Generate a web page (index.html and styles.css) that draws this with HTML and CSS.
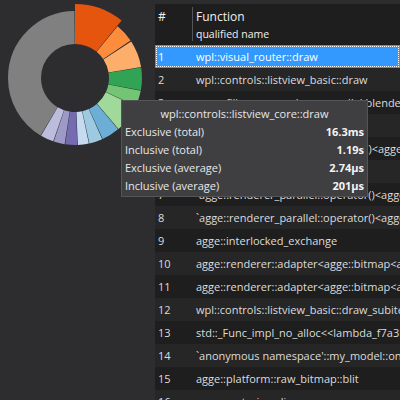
FILE: index.html
```html
<!DOCTYPE html>
<html>
<head>
<meta charset="utf-8">
<link rel="stylesheet" href="styles.css">
</head>
<body>
<div class="app">
  <div class="chart">
    <svg width="155" height="400" viewBox="0 0 155 400">
      <g transform="rotate(-90 75 78)" fill="none">
        <circle class="seg" cx="75" cy="78" r="50.5" pathLength="360" stroke="#808080" stroke-dasharray="148.5 360" stroke-dashoffset="-211"/>
        <circle class="seg" cx="75" cy="78" r="50.5" pathLength="360" stroke="#fd8d3c" stroke-dasharray="16.5 360" stroke-dashoffset="-39.5"/>
        <circle class="seg" cx="75" cy="78" r="50.5" pathLength="360" stroke="#fdae6b" stroke-dasharray="23.5 360" stroke-dashoffset="-57"/>
        <circle class="seg" cx="75" cy="78" r="50.5" pathLength="360" stroke="#31a354" stroke-dasharray="19.5 360" stroke-dashoffset="-81"/>
        <circle class="seg" cx="75" cy="78" r="50.5" pathLength="360" stroke="#74c476" stroke-dasharray="13.5 360" stroke-dashoffset="-101"/>
        <circle class="seg" cx="75" cy="78" r="50.5" pathLength="360" stroke="#a1d99b" stroke-dasharray="24.5 360" stroke-dashoffset="-115"/>
        <circle class="seg" cx="75" cy="78" r="50.5" pathLength="360" stroke="#6baed6" stroke-dasharray="15.5 360" stroke-dashoffset="-140"/>
        <circle class="seg" cx="75" cy="78" r="50.5" pathLength="360" stroke="#9ecae1" stroke-dasharray="11.5 360" stroke-dashoffset="-156"/>
        <circle class="seg" cx="75" cy="78" r="50.5" pathLength="360" stroke="#c6dbef" stroke-dasharray="9.5 360" stroke-dashoffset="-168"/>
        <circle class="seg" cx="75" cy="78" r="50.5" pathLength="360" stroke="#756bb1" stroke-dasharray="10.5 360" stroke-dashoffset="-178"/>
        <circle class="seg" cx="75" cy="78" r="50.5" pathLength="360" stroke="#9e9ac8" stroke-dasharray="9.5 360" stroke-dashoffset="-189"/>
        <circle class="seg" cx="75" cy="78" r="50.5" pathLength="360" stroke="#bcbddc" stroke-dasharray="11.5 360" stroke-dashoffset="-199"/>
        <circle class="hot" cx="75" cy="78" r="54" pathLength="360" stroke="#e6550d" stroke-dasharray="39 360" stroke-dashoffset="0"/>
      </g>
    </svg>
  </div>
  <div class="table">
    <div class="head">
      <div class="hnum">#</div>
      <div class="hfunc">
        <div class="htitle">Function</div>
        <div class="hsub">qualified name</div>
      </div>
    </div>
    <div class="rows">
      <div class="row sel"><span class="num">1</span><span class="fn">wpl::visual_router::draw</span></div>
      <div class="row"><span class="num">2</span><span class="fn">wpl::controls::listview_basic::draw</span></div>
      <div class="row"><span class="num">3</span><span class="fn">agge::fill&lt;agge::renderer_parallel,blender_solid_color&gt;</span></div>
      <div class="row"><span class="num">4</span><span class="fn">wpl::controls::listview_core::draw</span></div>
      <div class="row"><span class="num">5</span><span class="fn">agge::renderer_parallel::operator()&lt;agge::renderer</span></div>
      <div class="row"><span class="num">6</span><span class="fn">agge::rasterizer::sort</span></div>
      <div class="row"><span class="num">7</span><span class="fn">`agge::renderer_parallel::operator()&lt;agge::renderer</span></div>
      <div class="row"><span class="num">8</span><span class="fn">`agge::renderer_parallel::operator()&lt;agge::renderer</span></div>
      <div class="row"><span class="num">9</span><span class="fn">agge::interlocked_exchange</span></div>
      <div class="row"><span class="num">10</span><span class="fn">agge::renderer::adapter&lt;agge::bitmap&lt;agge::platform</span></div>
      <div class="row"><span class="num">11</span><span class="fn">agge::renderer::adapter&lt;agge::bitmap&lt;agge::platform</span></div>
      <div class="row"><span class="num">12</span><span class="fn">wpl::controls::listview_basic::draw_subitem</span></div>
      <div class="row"><span class="num">13</span><span class="fn">std::_Func_impl_no_alloc&lt;&lt;lambda_f7a3b2&gt;</span></div>
      <div class="row"><span class="num">14</span><span class="fn">`anonymous namespace'::my_model::on_updated</span></div>
      <div class="row"><span class="num">15</span><span class="fn">agge::platform::raw_bitmap::blit</span></div>
      <div class="row"><span class="num">16</span><span class="fn">agge::rasterizer::line</span></div>
    </div>
  </div>
  <div class="tip">
    <div class="tip-title">wpl::controls::listview_core::draw</div>
    <div class="tip-grid">
      <span class="lbl">Exclusive (total)</span><span class="val">16.3ms</span>
      <span class="lbl">Inclusive (total)</span><span class="val">1.19s</span>
      <span class="lbl">Exclusive (average)</span><span class="val">2.74μs</span>
      <span class="lbl">Inclusive (average)</span><span class="val">201μs</span>
    </div>
  </div>
</div>
</body>
</html>
```
FILE: styles.css
```css
* { box-sizing: border-box; }
html, body {
  margin: 0;
  padding: 0;
  width: 400px;
  height: 400px;
  overflow: hidden;
  background: #2d2d30;
  font-family: "Open Sans", "Noto Sans", sans-serif;
  font-size: 11px;
  color: #dcdcdc;
}
.app {
  position: relative;
  display: flex;
  width: 400px;
  height: 400px;
}
.chart {
  width: 155px;
  flex: none;
}
.chart svg { display: block; }
.seg { stroke-width: 33; }
.hot { stroke-width: 40; }
.table {
  flex: 1;
  min-width: 0;
  padding-top: 4px;
  display: flex;
  flex-direction: column;
  overflow: hidden;
}
.head {
  height: 41px;
  background: #1e1e1e;
  display: flex;
  flex: none;
  color: #f0f0f0;
}
.hnum {
  width: 37px;
  padding: 5px 0 0 3px;
  font-size: 12px;
  line-height: 16px;
}
.hfunc {
  flex: 1;
  margin: 3px 0 4px;
  border-left: 1px solid #555558;
  padding: 2px 0 0 3px;
}
.htitle {
  font-size: 12px;
  line-height: 16px;
}
.hsub {
  margin-top: 2px;
  font-size: 10.5px;
  line-height: 14px;
}
.rows {
  display: flex;
  flex-direction: column;
}
.row {
  height: 23px;
  line-height: 23px;
  display: flex;
  white-space: nowrap;
  background: #1e1e1e;
  flex: none;
}
.row:nth-child(even) { background: #262627; }
.row.sel {
  background: #3399ff;
  color: #ffffff;
  outline: 1px dotted #ffffff;
  outline-offset: -2px;
}
.num {
  width: 37px;
  flex: none;
  padding-left: 3px;
}
.fn {
  padding-left: 4px;
}
.tip {
  position: absolute;
  left: 121px;
  top: 100px;
  width: 247px;
  height: 97px;
  background: #3f3f42;
  border: 1px solid #555558;
  padding: 4px 3px 1px 3px;
  color: #e8e8e8;
  line-height: 18px;
}
.tip-title {
  text-align: center;
}
.tip-grid {
  display: grid;
  grid-template-columns: 1fr auto;
}
.val {
  text-align: right;
  font-weight: bold;
  color: #f4f4f4;
}
```
